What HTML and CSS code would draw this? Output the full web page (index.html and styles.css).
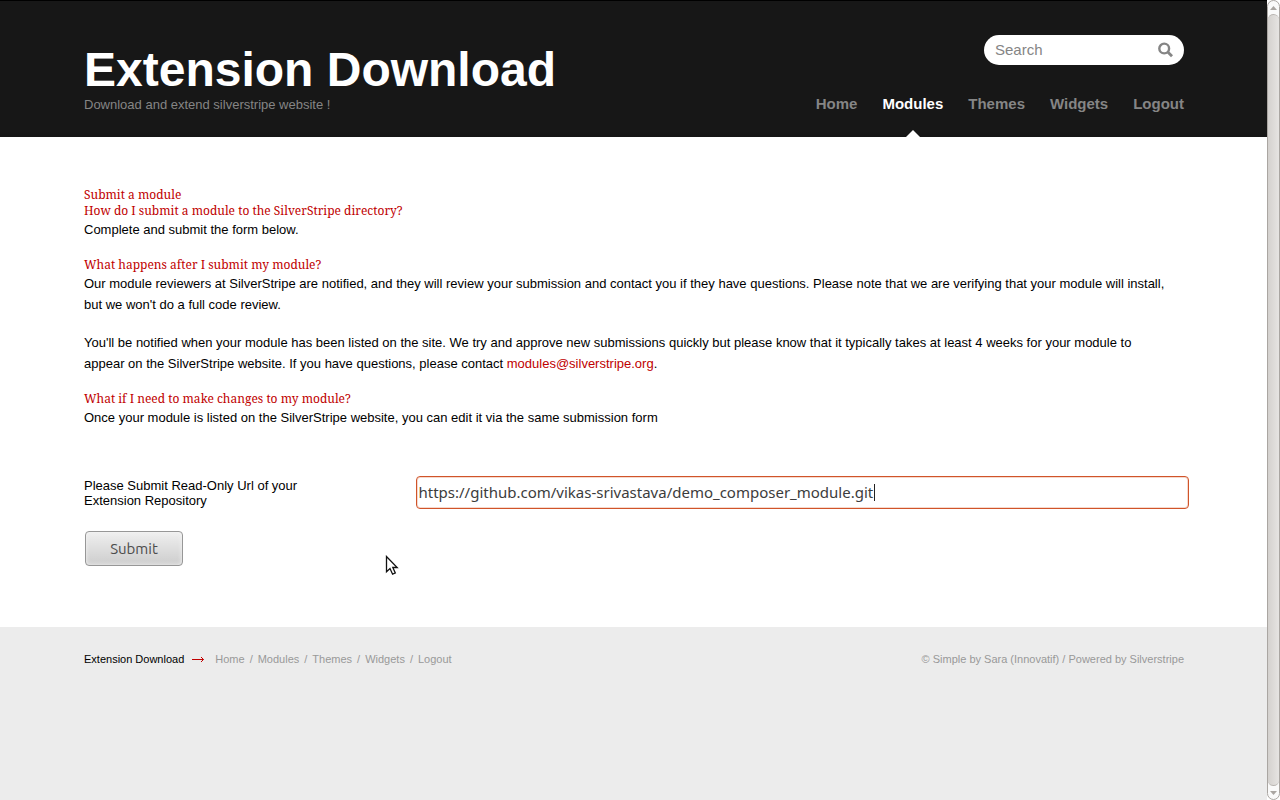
FILE: index.html
```html
<!DOCTYPE html>
<html lang="en">
<head>
<meta charset="utf-8">
<meta name="viewport" content="width=device-width, initial-scale=1">
<title>Extension Download</title>
<link rel="stylesheet" href="styles.css">
</head>
<body>
<div class="viewport">
  <div class="page">
    <header class="header">
      <div class="container header-inner">
        <div class="brand">
          <h1 class="title">Extension Download</h1>
          <p class="tagline">Download and extend silverstripe website !</p>
        </div>
        <div class="header-side">
          <form class="search" role="search">
            <input class="search-input" type="text" placeholder="Search" aria-label="Search">
            <button class="search-button" type="button" aria-label="Go">
              <svg width="15" height="16" viewBox="0 0 15 16" fill="none" stroke="#858585" stroke-width="2.4"><circle cx="6.2" cy="6.5" r="4.9"/><path d="M9.8 10 14 14.2" stroke-width="2.8"/></svg>
            </button>
          </form>
          <nav class="nav" aria-label="Main">
            <a class="nav-link" href="#">Home</a>
            <a class="nav-link current" href="#">Modules</a>
            <a class="nav-link" href="#">Themes</a>
            <a class="nav-link" href="#">Widgets</a>
            <a class="nav-link" href="#">Logout</a>
          </nav>
        </div>
      </div>
    </header>
    <main class="main">
      <div class="container">
        <h2 class="heading">Submit a module</h2>
        <h3 class="heading">How do I submit a module to the SilverStripe directory?</h3>
        <p class="text">Complete and submit the form below.</p>
        <h3 class="heading">What happens after I submit my module?</h3>
        <p class="text">Our module reviewers at SilverStripe are notified, and they will review your submission and contact you if they have questions. Please note that we are verifying that your module will install, but we won't do a full code review.</p>
        <p class="text">You'll be notified when your module has been listed on the site. We try and approve new submissions quickly but please know that it typically takes at least 4 weeks for your module to appear on the SilverStripe website. If you have questions, please contact <a class="mail" href="#">modules@silverstripe.org</a>.</p>
        <h3 class="heading">What if I need to make changes to my module?</h3>
        <p class="text">Once your module is listed on the SilverStripe website, you can edit it via the same submission form</p>
        <form class="form">
          <div class="field">
            <label class="label" for="url">Please Submit Read-Only Url of your Extension Repository</label>
            <div class="control">
              <input class="input" id="url" type="text" value="https://github.com/vikas-srivastava/demo_composer_module.git">
              <span class="caret"></span>
            </div>
          </div>
          <button class="submit" type="button">Submit</button>
        </form>
      </div>
    </main>
    <footer class="footer">
      <div class="container footer-inner">
        <div class="crumbs">
          <a class="home" href="#">Extension Download</a>
          <svg class="arrow" width="12" height="7" viewBox="0 0 12 7" fill="none" stroke="#c00000"><path d="M0 3.5H11.5"/><path d="M9 1 11.5 3.5 9 6"/></svg>
          <nav class="links" aria-label="Footer">
            <a href="#">Home</a><span>/</span><a href="#">Modules</a><span>/</span><a href="#">Themes</a><span>/</span><a href="#">Widgets</a><span>/</span><a href="#">Logout</a>
          </nav>
        </div>
        <small class="credit">© Simple by Sara (Innovatif) / Powered by Silverstripe</small>
      </div>
    </footer>
  </div>
  <div class="scrollbar" aria-hidden="true">
    <div class="step"><svg width="7" height="4" viewBox="0 0 7 4" fill="#aaa6a2"><path d="M0 4 3.5 0 7 4z"/></svg></div>
    <div class="thumb"></div>
    <div class="step"><svg width="7" height="4" viewBox="0 0 7 4" fill="#aaa6a2"><path d="M0 0 3.5 4 7 0z"/></svg></div>
  </div>
</div>
<svg class="pointer" width="14" height="21" viewBox="0 0 14 21" aria-hidden="true"><path d="M1.5 1.5V16.8L5 13.5 7.6 19.2 10.3 18 7.8 12.5H12.2z" fill="#fff" stroke="#111" stroke-width="1.3"/></svg>
</body>
</html>
```
FILE: styles.css
```css
* { box-sizing: border-box; }
body {
  margin: 0;
  font-family: "Liberation Sans", Arial, sans-serif;
  font-size: 13px;
  color: #000;
  background: #fff;
}
h1, h2, h3, p { margin: 0; }
a { color: inherit; text-decoration: none; }
button, input { font: inherit; }

.viewport {
  display: grid;
  grid-template-columns: minmax(0, 1fr) 13px;
  min-height: 100vh;
}
.page { display: flex; flex-direction: column; }
.container { width: 100%; max-width: 1101px; margin: 0 auto; padding-left: 1px; }

.header {
  background: linear-gradient(#171717 96%, #141414);
  border-top: 1px solid #000;
}
.header-inner { display: flex; justify-content: space-between; }
.brand { padding: 41px 0 24px; }
.title { font-size: 48px; line-height: 55px; color: #fff; }
.tagline { line-height: 16px; color: #858585; }
.header-side {
  display: flex;
  flex-direction: column;
  justify-content: space-between;
  align-items: flex-end;
  padding-top: 34px;
}
.search {
  display: flex;
  align-items: center;
  width: 200px;
  height: 30px;
  padding: 0 11px;
  border-radius: 15px;
  background: #fff;
}
.search-input {
  flex: 1;
  min-width: 0;
  height: 28px;
  padding: 0 0 2px;
  border: 0;
  outline: 0;
  font-size: 15px;
  background: none;
}
.search-input::placeholder { color: #858585; opacity: 1; }
.search-button { display: flex; padding: 0; border: 0; background: none; }
.nav { display: flex; gap: 25px; font-size: 15px; font-weight: bold; line-height: 18px; color: #858585; }
.nav-link { position: relative; padding-bottom: 24px; }
.current { color: #fff; }
.current::after {
  content: "";
  position: absolute;
  bottom: 0;
  left: 50%;
  margin-left: -7px;
  border: 7px solid transparent;
  border-top: 0;
  border-bottom-color: #fff;
}

.main { padding: 50px 0 61px; }
.heading {
  font-family: "Droid Serif", "Noto Serif", "Liberation Serif", serif;
  font-size: 12px;
  font-weight: normal;
  line-height: 16px;
  color: #c00000;
}
.text { max-width: 1085px; line-height: 21px; margin-bottom: 17px; }
.mail { color: #c00000; }
.form { padding-top: 31px; }
.field { display: flex; justify-content: space-between; margin-right: -5px; }
.label { width: 230px; padding-top: 2px; line-height: 15px; }
.control { position: relative; width: 70%; }
.input {
  width: 100%;
  height: 33px;
  padding: 0 2px 2px;
  border: 1px solid #d0542a;
  border-radius: 4px;
  outline: 0;
  box-shadow: inset 0 0 0 1px #f6d9cd;
  background: #fff;
  font-family: "Noto Sans", sans-serif;
  font-size: 15px;
  color: #3c3c3c;
}
.caret { position: absolute; left: 458px; top: 8px; width: 1px; height: 17px; background: #222; }
.submit {
  margin: 22px 0 0 1px;
  width: 98px;
  height: 35px;
  padding: 0;
  border: 1px solid #979797;
  border-radius: 4px;
  background: linear-gradient(#efefef, #cdcdcd);
  box-shadow: inset 0 0 4px #f4f4f4;
  font-family: Ubuntu, "Noto Sans", sans-serif;
  font-size: 15px;
  color: #4c4c4c;
}

.footer { flex: 1; padding-top: 24px; background: #ececec; font-size: 11px; line-height: 16px; color: #999; }
.footer-inner { display: flex; justify-content: space-between; }
.crumbs { display: flex; align-items: center; }
.home { color: #000; }
.arrow { margin: 0 11px 0 8px; }
.links { display: flex; gap: 5px; }
.credit { font-size: 11px; }

.scrollbar { display: flex; flex-direction: column; background: #fafafa; border: 1px solid #aaa6a2; border-radius: 7px; }
.step { display: flex; align-items: center; justify-content: center; height: 13px; }
.thumb {
  flex: 1;
  border: solid #b8b4b0;
  border-width: 1px 0;
  border-radius: 6px;
  background: linear-gradient(90deg, #d4d1ce, #e6e4e2);
}
.pointer { position: absolute; left: 385px; top: 555px; }
```
